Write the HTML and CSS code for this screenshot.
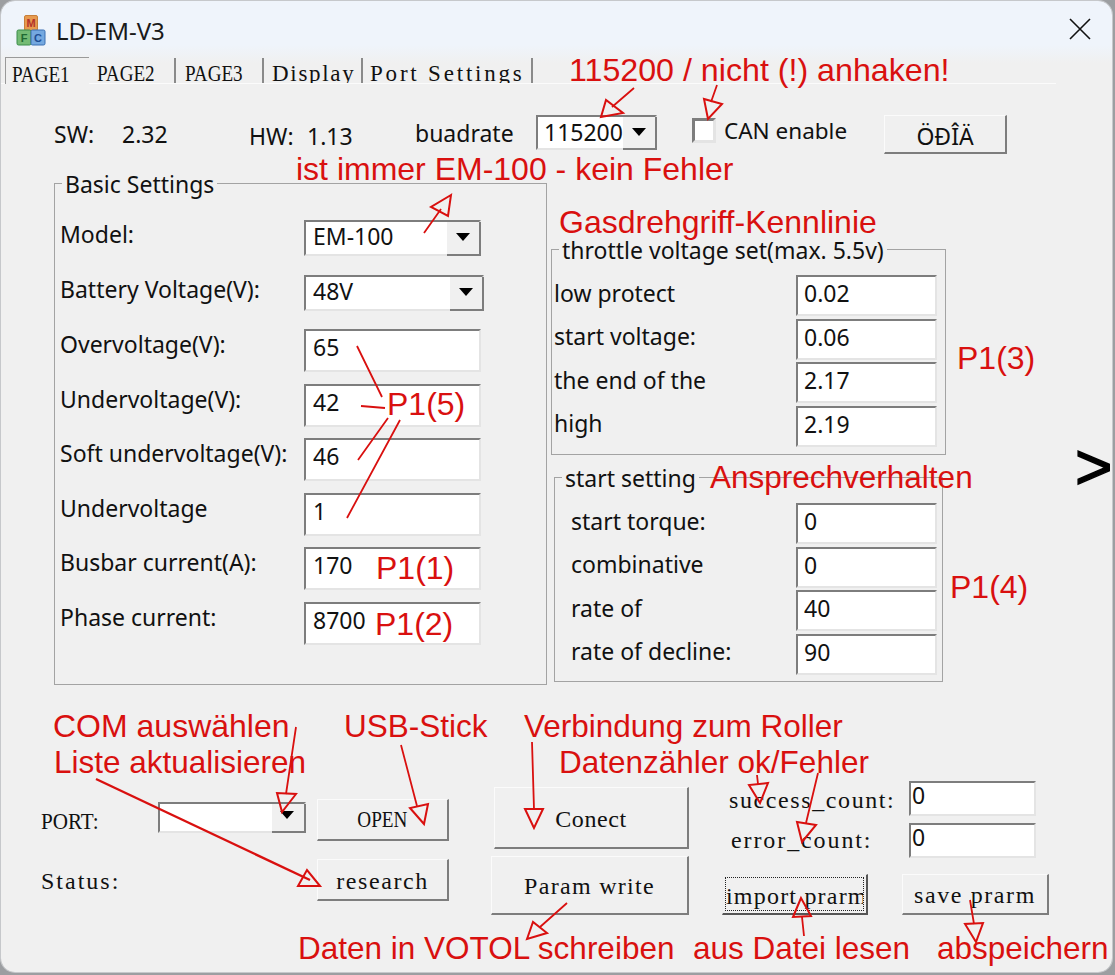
FILE: index.html
```html
<!DOCTYPE html>
<html lang="de">
<head>
<meta charset="utf-8">
<title>LD-EM-V3</title>
<link rel="stylesheet" href="styles.css">
</head>
<body>
<div class="window">
  <header class="titlebar">
    <svg class="app-icon" viewBox="0 0 30 32" width="30" height="32" aria-hidden="true">
      <rect x="8.5" y="1.5" width="13" height="15" rx="1.5" fill="#e79a4f" stroke="#c77f3a"/>
      <rect x="1" y="16" width="14" height="15" rx="1.5" fill="#74bb74" stroke="#3a8c4a"/>
      <rect x="15" y="16" width="14" height="15" rx="1.5" fill="#74a8e0" stroke="#3a6fb2"/>
      <text x="15" y="13" class="icon-m">M</text>
      <text x="8" y="28" class="icon-f">F</text>
      <text x="22" y="28" class="icon-c">C</text>
    </svg>
    <span class="title">LD-EM-V3</span>
    <svg class="close" viewBox="0 0 22 22" width="22" height="22" aria-hidden="true"><path d="M1 1 21 21M21 1 1 21" stroke="#111" stroke-width="1.6" fill="none"/></svg>
  </header>

  <nav class="tabs">
    <span class="tab tab-active"><span class="caps">PAGE1</span></span>
    <span class="tab tab-2"><span class="caps">PAGE2</span></span>
    <span class="tab tab-3"><span class="caps">PAGE3</span></span>
    <span class="tab tab-4">Display</span>
    <span class="tab tab-5">Port Settings</span>
  </nav>

  <main class="panel">
    <section class="top-row">
      <span class="ui sw-k">SW:</span>
      <span class="ui sw-v">2.32</span>
      <span class="ui hw-k">HW:</span>
      <span class="ui hw-v">1.13</span>
      <span class="ui baud-k">buadrate</span>
      <div class="combo combo-baud"><span class="combo-text">115200</span><span class="combo-btn"></span></div>
      <span class="check"></span>
      <span class="ui can">CAN enable</span>
      <button class="btn btn-lang ui-btn">ÖÐÎÄ</button>
    </section>

    <section class="groups">
      <div class="group group-basic">
        <div class="legend">Basic Settings</div>
        <div class="form">
          <div class="form-row row-combo"><span class="ui label">Model:</span><div class="combo combo-model"><span class="combo-text">EM-100</span><span class="combo-btn"></span></div></div>
          <div class="form-row row-combo2"><span class="ui label">Battery Voltage(V):</span><div class="combo combo-batt"><span class="combo-text">48V</span><span class="combo-btn"></span></div></div>
          <div class="form-row row-first"><span class="ui label">Overvoltage(V):</span><div class="input input-left">65</div></div>
          <div class="form-row"><span class="ui label">Undervoltage(V):</span><div class="input input-left">42</div></div>
          <div class="form-row"><span class="ui label">Soft undervoltage(V):</span><div class="input input-left">46</div></div>
          <div class="form-row"><span class="ui label">Undervoltage</span><div class="input input-left">1</div></div>
          <div class="form-row"><span class="ui label">Busbar current(A):</span><div class="input input-left">170</div></div>
          <div class="form-row"><span class="ui label">Phase current:</span><div class="input input-left">8700</div></div>
        </div>
      </div>

      <div class="right-col">
        <div class="group group-throttle">
          <div class="legend">throttle voltage set(max. 5.5v)</div>
          <div class="rows">
            <div class="rrow"><span class="ui rlabel">low protect</span><div class="input input-right">0.02</div></div>
            <div class="rrow"><span class="ui rlabel">start voltage:</span><div class="input input-right">0.06</div></div>
            <div class="rrow"><span class="ui rlabel">the end of the</span><div class="input input-right">2.17</div></div>
            <div class="rrow"><span class="ui rlabel">high</span><div class="input input-right">2.19</div></div>
          </div>
        </div>
        <div class="group group-start">
          <div class="legend">start setting</div>
          <div class="rows rows-start">
            <div class="rrow"><span class="ui rlabel">start torque:</span><div class="input input-right">0</div></div>
            <div class="rrow"><span class="ui rlabel">combinative</span><div class="input input-right">0</div></div>
            <div class="rrow"><span class="ui rlabel">rate of</span><div class="input input-right">40</div></div>
            <div class="rrow"><span class="ui rlabel">rate of decline:</span><div class="input input-right">90</div></div>
          </div>
        </div>
      </div>
    </section>

    <section class="bottom">
      <div class="port-col">
        <div class="port-row">
          <span class="mono port-label"><span class="caps caps-port">PORT:</span></span>
          <div class="combo combo-port"><span class="combo-text"></span><span class="combo-btn"></span></div>
          <button class="btn btn-port mono"><span class="caps caps-mid">OPEN</span></button>
        </div>
        <div class="port-row port-row-2">
          <span class="mono status-label">Status:</span>
          <button class="btn btn-port btn-research mono">research</button>
        </div>
      </div>
      <div class="conn-col">
        <button class="btn btn-connect mono">Conect</button>
        <button class="btn btn-write mono">Param write</button>
      </div>
      <div class="count-col">
        <div class="count-row"><span class="mono count-label">success_count:</span><div class="input input-count mono">0</div></div>
        <div class="count-row count-row-2"><span class="mono count-label error">error_count:</span><div class="input input-count mono">0</div></div>
        <div class="file-row">
          <button class="btn btn-file btn-focus mono"><span class="focus-ring">import prarm</span></button>
          <button class="btn btn-file btn-save mono">save prarm</button>
        </div>
      </div>
    </section>
  </main>

  <span class="chevron">&gt;</span>

  <span class="note n-baud">115200 / nicht (!) anhaken!</span>
  <span class="note n-model">ist immer EM-100 - kein Fehler</span>
  <span class="note n-gas">Gasdrehgriff-Kennlinie</span>
  <span class="note n-p15">P1(5)</span>
  <span class="note n-p13">P1(3)</span>
  <span class="note note-s n-ans">Ansprechverhalten</span>
  <span class="note n-p11">P1(1)</span>
  <span class="note n-p12">P1(2)</span>
  <span class="note n-p14">P1(4)</span>
  <span class="note n-com">COM auswählen</span>
  <span class="note note-s n-liste">Liste aktualisieren</span>
  <span class="note note-s n-usb">USB-Stick</span>
  <span class="note note-s n-verb">Verbindung zum Roller</span>
  <span class="note note-s n-zaehl">Datenzähler ok/Fehler</span>
  <span class="note note-s n-daten">Daten in VOTOL schreiben</span>
  <span class="note note-s n-datei">aus Datei lesen</span>
  <span class="note note-s n-abs">abspeichern</span>

  <svg class="marks" viewBox="0 0 1115 975" width="1115" height="975" aria-hidden="true">
    <path d="M634 88 612 107M717 85 711 102M424 233 441 209M296 727 286 794M401 745 417 806M532 742 534 809M567 903 540 927M757 775 758 784M818 773 806 823M804 936 802 917M970 900 974 924M357 346 382 397M361 406 385 408M388 418 358 460M400 420 347 518"/>
    <path class="thick" d="M96 779 310 880"/>
    <path class="head" d="M601 117 606 100 623 113ZM708 119 704 99 722 104ZM451 195 431 207 448 216ZM282 812 277 793 296 794ZM320 886 307 870 298 886ZM424 824 410 808 428 804ZM534 828 525 809 543 809ZM527 939 533 922 547 933ZM760 803 749 785 768 783ZM802 842 797 822 816 825ZM801 898 793 917 811 916ZM976 942 965 924 983 923Z"/>
  </svg>
</div>
</body>
</html>
```
FILE: styles.css
```css
* { box-sizing: border-box; }
html, body { margin: 0; padding: 0; }
body {
  width: 1115px;
  height: 975px;
  overflow: hidden;
  background: #9c9ea1;
}
.window {
  position: relative;
  width: 1111px;
  height: 971px;
  margin-top: 1px;
  margin-left: 1px;
  border-radius: 14px;
  background: linear-gradient(#eff4fb 0, #eff4fb 44px, #f0f0f0 62px);
  overflow: hidden;
  box-shadow: 0 0 0 1px #c6c8cb;
}
.titlebar {
  height: 56px;
  display: flex;
  align-items: center;
  padding: 0 21px 0 15px;
}
.app-icon { flex: none; margin-top: 2px; }
.app-icon text { font-family: "Liberation Sans", sans-serif; font-size: 11px; font-weight: 700; text-anchor: middle; }
.icon-m { fill: #b3322a; }
.icon-f { fill: #1f6a32; }
.icon-c { fill: #1f4f94; }
.title {
  margin-left: 10px;
  font-family: "Noto Sans", sans-serif;
  font-size: 24px;
  color: #1a1a1a;
  margin-top: 2px;
}
.close { margin-left: auto; margin-top: -1px; }

.tabs {
  height: 27px;
  display: flex;
  align-items: flex-end;
  padding-left: 4px;
  font-family: "Liberation Serif", serif;
  font-size: 23px;
  letter-spacing: 2.1px;
  color: #111;
  position: relative;
}
.tabs::after {
  content: "";
  position: absolute;
  left: 0;
  width: 1055px;
  bottom: 0;
  height: 1px;
  background: #fbfbfb;
}
.caps { display: inline-block; transform: scaleX(.83); transform-origin: left center; letter-spacing: 0; }
.caps-mid { transform: scaleX(.8); transform-origin: center center; }
.caps-port { transform: scaleX(.88); }
.tab {
  height: 26px;
  line-height: 32px;
  overflow: hidden;
  border-right: 2px solid #8a8a8a;
  white-space: nowrap;
}
.tab-active { width: 84px; padding-left: 6px; border-top: 1px solid #9a9a9a; border-left: 1px solid #9a9a9a; border-right: 0; background: #f0f0f0; height: 27px; line-height: 33px; position: relative; z-index: 1; }
.tab-2 { width: 87px; padding-left: 8px; }
.tab-3 { width: 88px; padding-left: 9px; }
.tab-4 { width: 99px; padding-left: 8px; letter-spacing: 1.7px; }
.tab-5 { width: 170px; padding-left: 7px; letter-spacing: 2.8px; }

.ui { font-family: "Noto Sans", sans-serif; font-size: 23px; color: #111; white-space: nowrap; }
.mono { font-family: "Liberation Serif", serif; font-size: 24px; letter-spacing: 1.6px; color: #111; white-space: nowrap; }

.panel { padding-top: 31px; }
.top-row {
  height: 39px;
  display: flex;
  align-items: flex-start;
  padding-left: 53px;
}
.sw-k { width: 68px; line-height: 38px; }
.sw-v { width: 127px; line-height: 38px; }
.hw-k { width: 58px; line-height: 42px; }
.hw-v { width: 108px; line-height: 42px; }
.baud-k { width: 121px; line-height: 36px; }
.combo {
  display: flex;
  background: #fff;
  border-style: solid;
  border-width: 2px;
  border-color: #7d7d7d #e4e4e4 #e4e4e4 #7d7d7d;
  flex: none;
}
.combo-text {
  flex: 1;
  font-family: "Noto Sans", sans-serif;
  font-size: 23px;
  color: #111;
  padding-left: 7px;
  line-height: 28px;
  white-space: nowrap;
  overflow: hidden;
}
.combo-btn {
  position: relative;
  flex: none;
  width: 34px;
  background: #f0f0f0;
  border-right: 2px solid #7d7d7d;
  border-bottom: 2px solid #7d7d7d;
  margin-right: -2px;
  margin-bottom: -2px;
}
.combo-btn::after {
  content: "";
  position: absolute;
  left: 9px;
  top: 11px;
  border-style: solid;
  border-width: 8px 7px 0;
  border-color: #000 transparent transparent;
}
.combo-baud { width: 121px; height: 35px; }
.combo-baud .combo-text { padding-left: 6px; line-height: 30px; }
.check {
  flex: none;
  width: 24px;
  height: 25px;
  margin: 3px 0 0 35px;
  background: #fff;
  border-style: solid;
  border-width: 3px;
  border-color: #7d7d7d #e4e4e4 #e4e4e4 #7d7d7d;
}
.can { margin-left: 8px; width: 160px; line-height: 32px; font-size: 22.5px; }
.btn {
  flex: none;
  display: block;
  padding: 0;
  background: #f0f0f0;
  border-style: solid;
  border-width: 1px 2px 2px 1px;
  border-color: #fbfbfb #7d7d7d #7d7d7d #fbfbfb;
  text-align: center;
}
.btn-lang { width: 123px; height: 39px; padding-top: 3px; font-family: "Noto Sans", sans-serif; font-size: 23px; color: #111; }

.groups { display: flex; align-items: flex-start; padding-left: 53px; margin-top: 29px; }
.group { border: 1px solid #a3a3a3; }
.legend {
  width: fit-content;
  font-family: "Noto Sans", sans-serif;
  font-size: 23px;
  line-height: 28px;
  color: #111;
  background: #f0f0f0;
  margin: -14px 0 0 7px;
  padding: 0 3px;
  white-space: nowrap;
}
.group-basic { width: 493px; height: 502px; flex: none; }
.form { margin-top: 22px; padding-left: 5px; display: flex; flex-direction: column; }
.form-row { display: flex; align-items: center; height: 43px; margin-top: 11.5px; }
.label { width: 244px; padding-bottom: 13px; }
.row-combo { height: 36px; margin-top: 0; }
.row-combo2 { height: 36px; margin-top: 19px; }
.row-combo .label, .row-combo2 .label { padding-bottom: 8px; }
.row-first { margin-top: 18px; }
.combo-model { width: 177px; height: 36px; }
.combo-batt { width: 180px; height: 36px; }
.input {
  flex: none;
  background: #fff;
  border-style: solid;
  border-width: 2px;
  border-color: #7d7d7d #e4e4e4 #e4e4e4 #7d7d7d;
  font-family: "Noto Sans", sans-serif;
  font-size: 23px;
  color: #111;
}
.input-left { width: 177px; height: 43px; padding-left: 7px; line-height: 32px; }

.right-col { margin-left: 4px; display: flex; flex-direction: column; align-items: flex-start; }
.group-throttle { width: 395px; height: 206px; margin-top: 66px; }
.group-start { width: 389px; height: 205px; margin: 22px 0 0 3px; }
.rows { margin-top: 11px; padding-left: 2px; display: flex; flex-direction: column; gap: 2.5px; }
.rows-start { padding-left: 16px; margin-top: 11px; }
.rrow { display: flex; align-items: center; height: 41px; }
.rlabel { width: 242px; padding-bottom: 6px; }
.rows-start .rlabel { width: 225px; }
.input-right { width: 141px; height: 41px; padding-left: 6px; line-height: 32px; }

.bottom { display: flex; align-items: flex-start; padding-left: 40px; margin-top: 96px; }
.port-col { width: 408px; flex: none; margin-top: 18px; }
.port-row { display: flex; align-items: center; height: 42px; }
.port-row-2 { margin-top: 18px; }
.port-label { width: 117px; padding-top: 2px; }
.status-label { width: 276px; letter-spacing: 2px; padding-top: 2px; }
.combo-port { width: 148px; height: 31px; margin: -6px 11px 0 0; }
.combo-port .combo-btn { width: 34px; }
.combo-port .combo-btn::after { top: 7px; left: 8px; }
.btn-port { width: 132px; height: 42px; }
.btn-research { padding-top: 3px; }
.conn-col { width: 198px; flex: none; margin-left: 42px; margin-top: 6px; display: flex; flex-direction: column; align-items: flex-end; }
.btn-connect { width: 195px; height: 62px; padding-top: 4px; letter-spacing: .6px; }
.btn-write { width: 198px; height: 59px; margin-top: 7px; padding-top: 3px; letter-spacing: 1.3px; }
.count-col { margin-left: 33px; width: 327px; flex: none; }
.count-row { display: flex; align-items: center; padding-left: 7px; height: 35px; }
.count-row-2 { margin-top: 7px; }
.count-label { width: 180px; padding-top: 3px; }
.error { padding-left: 2px; padding-top: 0; letter-spacing: 1.9px; }
.input-count { width: 127px; height: 35px; padding-left: 1px; line-height: 25px; }
.file-row { display: flex; gap: 34px; margin-top: 16px; }
.btn-file { width: 147px; height: 41px; }
.btn-save { padding-top: 2px; }
.btn-focus { width: 146px; border-color: #eee #555 #555 #eee; padding: 2px; letter-spacing: 1.2px; }
.focus-ring { display: block; height: 100%; line-height: 36px; border: 1px dotted #222; overflow: hidden; }

.chevron {
  position: absolute;
  left: 1074px;
  top: 431px;
  font-family: "Liberation Sans", sans-serif;
  font-size: 64px;
  line-height: 70px;
  color: #000;
  -webkit-text-stroke: 1.5px #000;
}
.note {
  position: absolute;
  font-family: "Liberation Sans", sans-serif;
  font-size: 32px;
  line-height: 36px;
  color: #d9100f;
  white-space: nowrap;
}
.note-s { font-size: 31.5px; }
.n-baud { left: 568px; top: 51px; font-size: 32.2px; }
.n-model { left: 295px; top: 150px; }
.n-gas { left: 558px; top: 203px; }
.n-p15 { left: 386px; top: 385px; }
.n-p13 { left: 956px; top: 339px; }
.n-ans { left: 709px; top: 458px; }
.n-p11 { left: 375px; top: 549px; }
.n-p12 { left: 374px; top: 605px; }
.n-p14 { left: 949px; top: 568px; }
.n-com { left: 52px; top: 707px; }
.n-liste { left: 53px; top: 743px; }
.n-usb { left: 343px; top: 707px; }
.n-verb { left: 523px; top: 707px; }
.n-zaehl { left: 558px; top: 743px; }
.n-daten { left: 297px; top: 929px; }
.n-datei { left: 692px; top: 929px; }
.n-abs { left: 936px; top: 929px; }

.marks { position: absolute; left: -1px; top: -1px; pointer-events: none; fill: none; stroke: #d9100f; stroke-width: 1.8; }
.marks .head { stroke-width: 2; }
.marks .thick { stroke-width: 2.4; }
```
